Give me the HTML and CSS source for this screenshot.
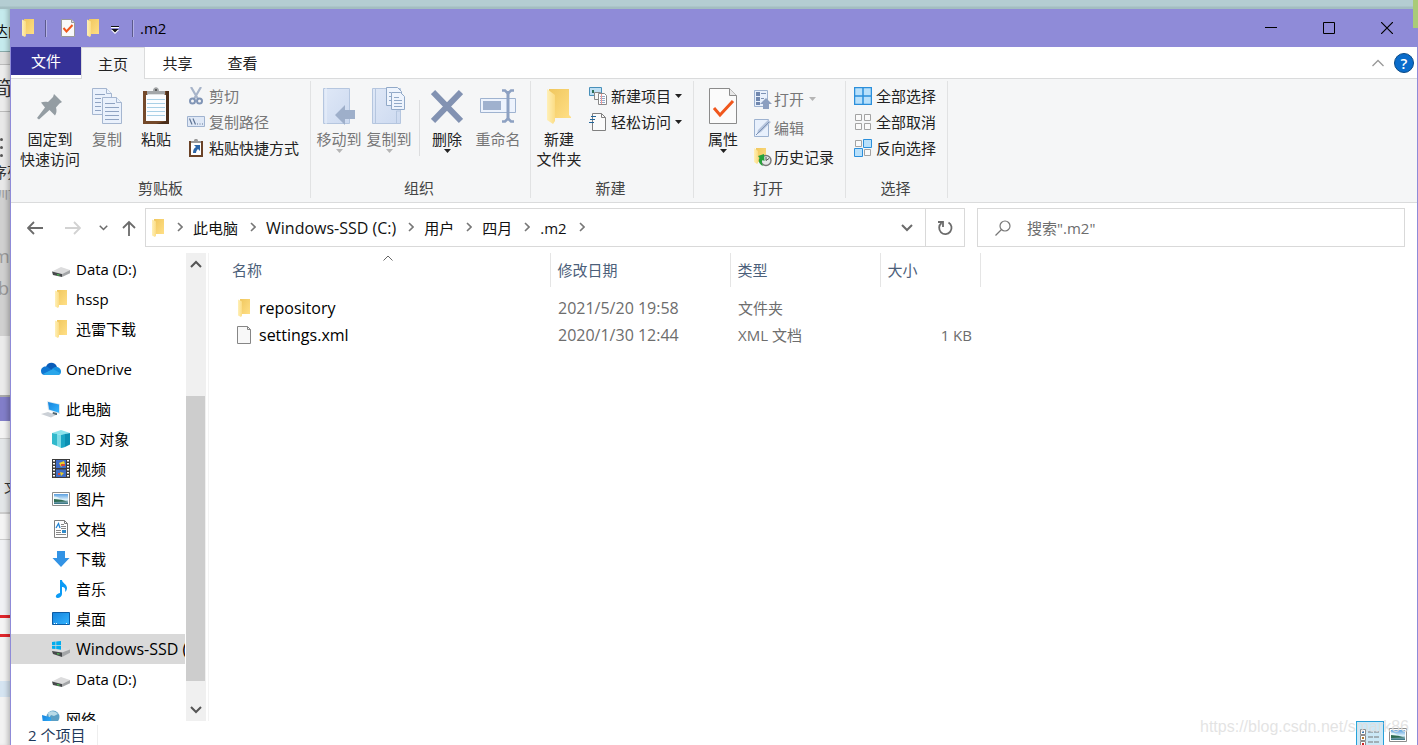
FILE: index.html
```html
<!DOCTYPE html>
<html lang="zh-CN">
<head>
<meta charset="utf-8">
<title>.m2</title>
<link rel="stylesheet" href="styles.css">
</head>
<body>
<svg class="defs" aria-hidden="true">
  <defs>
    <linearGradient id="gFold" x1="0" x2="1" y1="0" y2="1"><stop offset="0" stop-color="#f0c75e"/><stop offset="1" stop-color="#ffdf86"/></linearGradient>
    <linearGradient id="gFlap" x1="0" x2="1" y1="0" y2="0"><stop offset="0" stop-color="#fff0b8"/><stop offset="1" stop-color="#fbdc84"/></linearGradient>
    <linearGradient id="gPic" x1="0" x2="0" y1="0" y2="1"><stop offset="0" stop-color="#5b9fe0"/><stop offset=".55" stop-color="#d8eefa"/><stop offset="1" stop-color="#2c6a78"/></linearGradient>
    <linearGradient id="gBook" x1="0" x2="1" y1="0" y2="1"><stop offset="0" stop-color="#dfe8f7"/><stop offset="1" stop-color="#cddaf0"/></linearGradient>
    <linearGradient id="gBlue" x1="0" x2="1" y1="0" y2="1"><stop offset="0" stop-color="#1583dc"/><stop offset="1" stop-color="#35b5ff"/></linearGradient>
  </defs>
  <symbol id="folder" viewBox="0 0 14 18"><path d="M3 0h10v15H3z" fill="url(#gFold)"/><path d="M1 0.5l4 2v14L4 18l-3-1.500z" fill="url(#gFlap)"/></symbol>
  <symbol id="drive" viewBox="0 0 18 10"><path d="M0 4.500L9 0l9 3-8 4z" fill="#dcdcdd"/><path d="M0 4.500L10 7v3L1 8z" fill="#46494b"/><path d="M10 7l8-4v3.200L10 10z" fill="#a4a6a8"/><path d="M5 7.200l2.500.4v1L5 8.200z" fill="#4bd452"/></symbol>
  <symbol id="chev" viewBox="0 0 6 10"><path d="M1 1l4 4-4 4" fill="none" stroke="#777" stroke-width="1.600"/></symbol>
  <symbol id="tri" viewBox="0 0 7 4"><path d="M0 0h7L3.500 4z" fill="currentColor"/></symbol>
  <symbol id="picture" viewBox="0 0 18 14"><path d="M.5.5h17v13H.5z" fill="#fff" stroke="#8c8c8c"/><path d="M2 2h14v10H2z" fill="url(#gPic)"/><path d="M2 5c4 1 6 3 14 4.500L2 10z" fill="#2e6b52"/><path d="M2 4.500c3 0 6 1.500 7 3.200L2 7z" fill="#e4f4f8"/></symbol>
  <symbol id="down" viewBox="0 0 12 8"><path d="M1 1l5 5 5-5" fill="none" stroke="currentColor" stroke-width="2"/></symbol>
</svg>

<div class="desktop">
  <div class="top-edge"></div>
  <div class="left-edge" aria-hidden="true">
    <div class="seg seg-cyan"><span>达的</span></div>
    <div class="seg seg-gap"></div>
    <div class="seg seg-tool"><span>简</span></div>
    <div class="seg seg-list"><i></i><i></i><i></i><span>序列</span></div>
    <div class="seg seg-grey"><span class="cut">训训</span><span class="lat">m</span><span class="lat low">bl</span></div>
    <div class="seg seg-pale"></div>
    <div class="seg seg-purple"></div>
    <div class="seg seg-light"></div>
    <div class="seg seg-card"><span>文</span></div>
    <div class="seg seg-row"></div>
    <div class="seg seg-plain"></div>
    <div class="seg seg-red"></div>
    <div class="seg seg-blank"></div>
    <div class="seg seg-blue"></div>
    <div class="seg seg-rest"></div>
  </div>

  <div class="window">
    <header class="titlebar">
      <svg class="t-folder" width="14" height="18"><use href="#folder"/></svg>
      <span class="t-sep"></span>
      <button class="t-btn t-check" aria-label="属性"><svg width="14" height="18" viewBox="0 0 14 18"><path d="M.5.500h10l3 3v14H.5z" fill="#f9f9f9" stroke="#999"/><path d="M10.500.500v3h3" fill="#ddd" stroke="#999"/><path d="M2.500 9l3 3.500L11.500 6" fill="none" stroke="#f0571d" stroke-width="2"/></svg></button>
      <button class="t-btn t-new" aria-label="新建文件夹"><svg width="14" height="18"><use href="#folder"/></svg></button>
      <button class="t-btn t-more" aria-label="自定义快速访问工具栏"><svg width="8" height="8" viewBox="0 0 8 8"><path d="M0 .500h8" stroke="#111"/><path d="M0 1.500h8" stroke="#fff"/><path d="M0 4h8L4 8z" fill="#fff"/><path d="M.5 3h7L4 6.500z" fill="#111"/></svg></button>
      <span class="t-sep"></span>
      <span class="t-title">.m2</span>
      <div class="win-btns">
        <button aria-label="最小化"><svg width="12" height="12" viewBox="0 0 12 12"><path d="M0 5.500h12" stroke="#000"/></svg></button>
        <button aria-label="最大化"><svg width="12" height="12" viewBox="0 0 12 12"><path d="M.5.500h11v11H.5z" fill="none" stroke="#000"/></svg></button>
        <button aria-label="关闭"><svg width="12" height="12" viewBox="0 0 12 12"><path d="M0 0l12 12M12 0L0 12" stroke="#000" stroke-width="1.200"/></svg></button>
      </div>
      <div class="corner-note"></div>
    </header>

    <nav class="tabs">
      <button class="tab file">文件</button>
      <button class="tab active">主页</button>
      <button class="tab">共享</button>
      <button class="tab">查看</button>
      <div class="tabs-right">
        <button aria-label="最小化功能区"><svg width="12" height="8" viewBox="0 0 12 8"><path d="M.5 7L6 1.500 11.500 7" fill="none" stroke="#999" stroke-width="1.300"/></svg></button>
        <button class="help" aria-label="帮助">?</button>
      </div>
    </nav>

    <section class="ribbon">
      <div class="group g-clip">
        <div class="group-body">
          <button class="big w78"><svg width="28" height="40" viewBox="0 0 28 40"><path d="M18 7l8 8-2.500 1.500-3.500 4c1 3 .5 6-1 8l-5.500-5.500L3 32.500 1 31l8-10.500L5 15.500c2-1 5-1 7-.5l5-5z" fill="#949da3"/></svg>固定到<br>快速访问</button>
          <button class="big w36 off"><svg width="32" height="40" viewBox="0 0 32 40"><g fill="#eaf1fc" stroke="#a5b6d0"><path d="M1.500 1.500h14l5 5v21h-19z"/><path d="M15.500 1.500v5h5" /><path d="M11.500 10.500h14l5 5v21h-19z"/><path d="M25.500 10.500v5h5"/></g><path d="M4 7.500h10M4 11.500h6M4 15.500h6M4 19.500h6M4 23.500h6M14 16.500h10M14 20.500h14M14 24.500h14M14 28.500h14M14 32.500h14" stroke="#8fa3c2"/></svg>复制</button>
          <button class="big w62"><svg width="28" height="40" viewBox="0 0 28 40"><path d="M1 4h26v33H1z" fill="#74492a"/><path d="M24 4h3v33H14l10-3z" fill="#4a2e1b"/><path d="M4 8h20v26H4z" fill="#fbfdff"/><path d="M5 12.500h18M5 16.500h18M5 20.500h18M5 24.500h18M5 28.500h18" stroke="#a9d0e6"/><path d="M5 8V4h6c0-5 6-5 6 0h6v4z" fill="#a3a6a8"/><path d="M6 7.500h16" stroke="#dfe1e2"/><circle cx="14" cy="3" r="1" fill="#444"/></svg>粘贴</button>
          <div class="stack">
            <button class="small off"><svg width="18" height="18" viewBox="0 0 18 18"><path d="M4 0l7 12M14 0L7 12" stroke="#a7b4c9" stroke-width="2.200"/><g fill="none" stroke="#8195b6" stroke-width="2"><circle cx="5.500" cy="14" r="2.500"/><circle cx="12.500" cy="14" r="2.500"/></g></svg>剪切</button>
            <button class="small off"><svg width="18" height="18" viewBox="0 0 18 18"><path d="M.5 3.500h17v10H.5z" fill="#dfe8f6" stroke="#9fb2cf"/><path d="M2.500 5.500l2.500 6M6 5.500l2.500 6" stroke="#5f7595" stroke-width="1.200"/><path d="M10 11h6" stroke="#5f7595" stroke-width="1.200" stroke-dasharray="1 1.500"/></svg>复制路径</button>
            <button class="small"><svg width="18" height="18" viewBox="0 0 18 18"><path d="M2 2h14v16H2z" fill="#6b4328"/><path d="M4 4h10v12H4z" fill="#fff"/><path d="M4 4V2h3c0-3 4-3 4 0h3v2z" fill="#999"/><path d="M7 6h6v6l-2-2c-1 1-2 2-2 4H6c0-3 1-5 3-6z" fill="#2c66a8"/></svg>粘贴快捷方式</button>
          </div>
        </div>
        <div class="group-name">剪贴板</div>
      </div>

      <div class="group g-org">
        <div class="group-body">
          <button class="big w50 off"><svg width="32" height="40" viewBox="0 0 32 40"><path d="M.5 1.500h26v35H.5z" fill="url(#gBook)" stroke="#b5c6df"/><path d="M3 1v36" stroke="#eaf1fb"/><path d="M12 28l10-10v5h10v9H22v6z" fill="#9eafca"/></svg>移动到<svg class="tri" width="7" height="4"><use href="#tri"/></svg></button>
          <button class="big w50 off"><svg width="34" height="40" viewBox="0 0 34 40"><path d="M.5 1.500h28v35h-28z" fill="url(#gBook)" stroke="#b5c6df"/><path d="M3.500 1v36M24.500 36V24h4" stroke="#b5c6df" fill="none"/><g fill="#eef4fd" stroke="#91a9c8"><path d="M14.500.500h11l4 4v14h-15z"/><path d="M19.500 5.500h9l4 4v13h-13z"/></g><path d="M17 5.500h2M17 9.500h2M17 13.500h2M22 10.500h5M22 13.500h8M22 16.500h8M22 19.500h8" stroke="#91a9c8"/></svg>复制到<svg class="tri" width="7" height="4"><use href="#tri"/></svg></button>
          <span class="inner-sep"></span>
          <button class="big w54"><svg width="32" height="40" viewBox="0 0 32 40"><path d="M2 5l28 29M30 5L2 34" stroke="#8292b2" stroke-width="6"/></svg>删除<svg class="tri" width="7" height="4"><use href="#tri"/></svg></button>
          <button class="big w48 off"><svg width="36" height="40" viewBox="0 0 36 40"><path d="M.5 11.500h35v14H.5z" fill="#edf3fd" stroke="#9fb3d0"/><path d="M3 14h18v9H3z" fill="#9fb1ce"/><path d="M28 4v29" stroke="#8da1c2" stroke-width="3"/><path d="M22 3.500h3l3 3 3-3h3M22 34.500h3l3-3 3 3h3" fill="none" stroke="#8da1c2" stroke-width="2.500"/></svg>重命名</button>
        </div>
        <div class="group-name">组织</div>
      </div>

      <div class="group g-new">
        <div class="group-body">
          <button class="big w56"><svg width="26" height="40" viewBox="0 0 26 40"><path d="M3 2h20v26l2 2v1H3z" fill="url(#gFold)"/><path d="M1 2l8 6v26l-2 3-6-4z" fill="url(#gFlap)"/></svg>新建<br>文件夹</button>
          <div class="stack">
            <button class="small"><svg width="18" height="18" viewBox="0 0 18 18"><path d="M.5.500h12v8H.5z" fill="#bfe0f4" stroke="#4890ba"/><path d="M3 3h2v3H3z" fill="#2c6f58"/><path d="M5.500 5.500h6v7h-6z" fill="#f7f7f7" stroke="#888"/><path d="M9.500 6.500h6l2 2v9h-8z" fill="#fff" stroke="#888"/><path d="M11 9.500h5M11 11.500h5M11 13.500h5M11 15.500h5" stroke="#91a9c8"/><path d="M12.500 7v10" stroke="#e99"/></svg>新建项目<svg class="side-tri" width="7" height="4"><use href="#tri"/></svg></button>
            <button class="small"><svg width="18" height="18" viewBox="0 0 18 18"><path d="M3.500.500h9l4 4v13h-13z" fill="#fbfbfb" stroke="#808080"/><path d="M12.500.500v4h4" fill="none" stroke="#808080"/><path d="M2 3.500h5M1 6.500h5M0 9.500h5" stroke="#22669b" stroke-width="1.200"/></svg>轻松访问<svg class="side-tri" width="7" height="4"><use href="#tri"/></svg></button>
          </div>
        </div>
        <div class="group-name">新建</div>
      </div>

      <div class="group g-open">
        <div class="group-body">
          <button class="big w58"><svg width="28" height="40" viewBox="0 0 28 40"><path d="M.5 1.500h20l7 7v28H.5z" fill="#fbfbfb" stroke="#8b8b8b"/><path d="M20.500 1.500v7h7" fill="#e8e8e8" stroke="#8b8b8b"/><path d="M5 21l6 7 13-14" fill="none" stroke="#f0571d" stroke-width="3"/></svg>属性<svg class="tri" width="7" height="4"><use href="#tri"/></svg></button>
          <div class="stack roomy">
            <button class="small off"><svg width="18" height="20" viewBox="0 0 18 20"><path d="M.5 1.500h13v16H.5z" fill="#e8f0fc" stroke="#9db2d0"/><path d="M2 3h4v4H2zM2 8h4v4H2zM2 13h4v3H2z" fill="#7087ae"/><path d="M7 4.500h5M7 9.500h3" stroke="#7d92b5"/><path d="M12 9l6 6h-3v5H9v-5H6z" fill="#8c9fc0"/></svg>打开<svg class="side-tri" width="7" height="4"><use href="#tri"/></svg></button>
            <button class="small off"><svg width="18" height="20" viewBox="0 0 18 20"><path d="M.5 1.500h14v17H.5z" fill="#e8f0fc" stroke="#9db2d0"/><path d="M3 16l1-4L14 2l3 2L7 14z" fill="#b5c4dc"/><path d="M2 17L15 4" stroke="#7d92b5"/></svg>编辑</button>
            <button class="small"><svg width="18" height="20" viewBox="0 0 18 20"><path d="M2 1h10v14H2z" fill="url(#gFold)"/><path d="M0 1l4 3v12l-1 1-3-2z" fill="url(#gFlap)"/><circle cx="12" cy="13.500" r="5" fill="#e5e7e8" stroke="#777" stroke-width="1.400"/><path d="M12 10v3.500l3-2" fill="none" stroke="#555"/><path d="M10 7L4 9l1.500 2c-2 3 0 7 4 8-2-2-2-4-1-6l2 1z" fill="#26a23a"/></svg>历史记录</button>
          </div>
        </div>
        <div class="group-name">打开</div>
      </div>

      <div class="group g-sel">
        <div class="group-body">
          <div class="stack">
            <button class="small"><svg width="18" height="18" viewBox="0 0 18 18"><path d="M.5.500h17v17H.5zM9 0v18M0 9h18" fill="#b8e0fb" stroke="#2b8fdb" stroke-width="1.500"/></svg>全部选择</button>
            <button class="small"><svg width="18" height="18" viewBox="0 0 18 18"><path d="M1.500 1.500h6v6h-6zM10.500 1.500h6v6h-6zM1.500 10.500h6v6h-6zM10.500 10.500h6v6h-6z" fill="#fafafa" stroke="#a3a3a3"/></svg>全部取消</button>
            <button class="small"><svg width="18" height="18" viewBox="0 0 18 18"><path d="M1.500 1.500h6v6h-6zM10.500 10.500h6v6h-6z" fill="#fafafa" stroke="#a3a3a3"/><path d="M9.500.500h8v8h-8zM.5 9.500h8v8h-8z" fill="#b8e0fb" stroke="#2b8fdb"/></svg>反向选择</button>
          </div>
        </div>
        <div class="group-name">选择</div>
      </div>
    </section>

    <div class="navbar">
      <div class="nav-btns">
        <button aria-label="返回"><svg width="16" height="16" viewBox="0 0 16 16"><path d="M1 8h15M7 2L1 8l6 6" fill="none" stroke="#6b6b6b" stroke-width="1.800"/></svg></button>
        <button aria-label="前进"><svg width="16" height="16" viewBox="0 0 16 16"><path d="M0 8h15M9 2l6 6-6 6" fill="none" stroke="#d2d2d2" stroke-width="1.800"/></svg></button>
        <button class="nav-recent" aria-label="最近的位置"><svg width="9" height="6" viewBox="0 0 12 8"><use href="#down"/></svg></button>
        <button class="nav-up" aria-label="上移"><svg width="14" height="16" viewBox="0 0 14 16"><path d="M7 16V2M1 8l6-6 6 6" fill="none" stroke="#6b6b6b" stroke-width="1.800"/></svg></button>
      </div>
      <div class="address">
        <svg width="14" height="18"><use href="#folder"/></svg>
        <svg class="chev" width="6" height="10"><use href="#chev"/></svg><a href="#">此电脑</a>
        <svg class="chev" width="6" height="10"><use href="#chev"/></svg><a href="#" class="latin">Windows-SSD (C:)</a>
        <svg class="chev" width="6" height="10"><use href="#chev"/></svg><a href="#">用户</a>
        <svg class="chev" width="6" height="10"><use href="#chev"/></svg><a href="#">四月</a>
        <svg class="chev" width="6" height="10"><use href="#chev"/></svg><a href="#">.m2</a>
        <svg class="chev" width="6" height="10"><use href="#chev"/></svg>
        <button class="addr-drop" aria-label="以前的位置"><svg width="12" height="8"><use href="#down"/></svg></button>
        <button class="addr-refresh" aria-label="刷新"><svg width="16" height="16" viewBox="0 0 16 16"><path d="M11.500 2.500A6.200 6.200 0 1 1 4.500 3" fill="none" stroke="#6b6b6b" stroke-width="1.800"/><path d="M1 2h5v5" fill="none" stroke="#6b6b6b" stroke-width="1.800"/></svg></button>
      </div>
      <label class="search">
        <svg width="16" height="16" viewBox="0 0 16 16"><circle cx="10" cy="6" r="5" fill="none" stroke="#777" stroke-width="1.200"/><path d="M6.500 9.500L.5 15.500" stroke="#777" stroke-width="1.200"/></svg>
        <input type="text" placeholder='搜索".m2"' aria-label='搜索".m2"'>
      </label>
    </div>

    <main class="content">
      <nav class="tree">
        <a href="#" class="node sub"><svg class="disk" width="18" height="10"><use href="#drive"/></svg>Data (D:)</a>
        <a href="#" class="node sub"><svg width="18" height="18"><use href="#folder"/></svg>hssp</a>
        <a href="#" class="node sub"><svg width="18" height="18"><use href="#folder"/></svg>迅雷下载</a>
        <a href="#" class="node top"><svg width="20" height="14" viewBox="0 0 20 14"><path d="M5 5c1-5 9-6 11 0l-4 5z" fill="#0a5cb8"/><path d="M0 9c0-4 5-6 8-3l5 3-8 4H4c-2 0-4-1-4-4z" fill="#0f76d2"/><path d="M11 7c4-4 9-1 9 2.500 0 2-1 3.500-3 3.500z" fill="#1590df"/><path d="M2 12l10-5 7 4c-1 2-2 2-3 2H4z" fill="#2aa6ea"/></svg>OneDrive</a>
        <a href="#" class="node top"><svg width="20" height="18" viewBox="0 0 20 18"><path d="M6 1l13 3v10L7 10z" fill="#dbe8f0"/><path d="M7 2l11 2.500v8.200L8 9.500z" fill="url(#gBlue)"/><path d="M12 12l4 1v2l-5 0z" fill="#526773"/><path d="M0 14l7-2 8 3-5 2.500z" fill="#cbd0d6"/></svg>此电脑</a>
        <a href="#" class="node sub"><svg width="18" height="18" viewBox="0 0 18 18"><path d="M0 3l9-3 9 3-9 2z" fill="#8be3ec"/><path d="M0 3l5 1v12l-5-2z" fill="#31b9cc"/><path d="M13 4l5-1v11.500L13 17z" fill="#0b8fb2"/><path d="M5 4l4 1 4-1v13l-4 1-4-2z" fill="#7edbe6"/><path d="M9 5l4-1v13l-4 1z" fill="#1ba6c4"/></svg>3D 对象</a>
        <a href="#" class="node sub"><svg width="18" height="20" viewBox="0 0 18 20"><path d="M0 0h18v19H0z" fill="#3b3b3b"/><path d="M2 1v18M16 1v18" stroke="#fff" stroke-width="2" stroke-dasharray="1.500 1.500"/><path d="M4 1h10v8H4zM4 10.500h10V18H4z" fill="#3f6dc8"/><path d="M7 4l5-2 1 3-4 3zM8 13l4 1-3 3z" fill="#e9ce2b"/><path d="M9 5h4v2H9zM6 14h2v2H6z" fill="#d94a35"/></svg>视频</a>
        <a href="#" class="node sub"><svg width="18" height="14"><use href="#picture"/></svg>图片</a>
        <a href="#" class="node sub"><svg width="18" height="18" viewBox="0 0 18 18"><path d="M2.500.500h10l3 3v14h-13z" fill="#fff" stroke="#808080"/><path d="M12.500.500v3h3" fill="none" stroke="#808080"/><path d="M4 8l2.500-4.500L8 8" fill="none" stroke="#2286d8" stroke-width="1.300"/><path d="M9 4.500h3M9 6.500h5M9 8.500h5M4 10.500h5M4 12.500h5M4 14.500h10" stroke="#888"/><path d="M10 10h4v3h-4z" fill="#318ac8"/></svg>文档</a>
        <a href="#" class="node sub"><svg width="18" height="16" viewBox="0 0 18 16"><path d="M5 0h8v7h4.500L9 16 .5 7H5z" fill="#3293e5"/></svg>下载</a>
        <a href="#" class="node sub"><svg width="18" height="18" viewBox="0 0 18 18"><path d="M8 0h2c0 3 5 4 5 8 0 2-1 3-2 4 1-4-1-5-3-5v7c0 2-2 4-4.500 4S3 14 8 13z" fill="#0b9bf5"/></svg>音乐</a>
        <a href="#" class="node sub"><svg width="18" height="14" viewBox="0 0 18 14"><path d="M.5.500h17v12H.5z" fill="url(#gBlue)" stroke="#0c5ca4"/><path d="M2 11.500h14" stroke="#fff" stroke-dasharray="1 1 1 9"/></svg>桌面</a>
        <a href="#" class="node sub selected latin"><svg width="18" height="16" viewBox="0 0 18 16"><path d="M0 10l9-4 9 2.500-8 3.500z" fill="#dcdcdd"/><path d="M0 10l10 1.500V16L1 13z" fill="#46494b"/><path d="M10 11.500l8-3v3.200L10 16z" fill="#a4a6a8"/><path d="M5 12.200l2.500.4v1l-2.500-.4z" fill="#4bd452"/><path d="M0 1l3.500-.5V4H0zM4.200.400L9 0v4H4.200zM0 4.700h3.500v3.400L0 7.700zM4.200 4.700H9v4l-4.800-.6z" fill="#00adef"/></svg>Windows-SSD (C:)</a>
        <a href="#" class="node sub"><svg class="disk" width="18" height="10"><use href="#drive"/></svg>Data (D:)</a>
        <a href="#" class="node top"><svg width="20" height="18" viewBox="0 0 20 18"><circle cx="12" cy="7" r="6.500" fill="#5b9fc4"/><path d="M7 3c3-3 8-2 10 1l-4 2-3-1-2 3z" fill="#b9dbe8"/><path d="M1 5l9 2.500v9L2 14z" fill="url(#gBlue)"/></svg>网络</a>
      </nav>
      <div class="scrollbar">
        <button aria-label="向上滚动"><svg class="flip" width="12" height="8"><use href="#down"/></svg></button>
        <div class="thumb"></div>
        <button aria-label="向下滚动"><svg width="12" height="8"><use href="#down"/></svg></button>
      </div>
      <div class="files">
        <svg class="sort" width="10" height="6" viewBox="0 0 10 6"><path d="M.5 5.500L5 1l4.500 4.500" fill="none" stroke="#666"/></svg>
        <table>
          <colgroup><col class="c-name"><col class="c-date"><col class="c-type"><col class="c-size"><col></colgroup>
          <thead><tr><th>名称</th><th>修改日期</th><th>类型</th><th>大小</th><th class="filler"></th></tr></thead>
          <tbody>
            <tr><td class="name latin"><svg width="14" height="18"><use href="#folder"/></svg>repository</td><td class="latin">2021/5/20 19:58</td><td>文件夹</td><td class="num"></td><td></td></tr>
            <tr><td class="name latin"><svg width="14" height="18" viewBox="0 0 14 18"><path d="M.5.500h10l3 3v14H.5z" fill="#f8f8f8" stroke="#868686"/><path d="M10.500.500v3h3" fill="none" stroke="#868686"/></svg>settings.xml</td><td class="latin">2020/1/30 12:44</td><td>XML 文档</td><td class="num">1 KB</td><td></td></tr>
          </tbody>
        </table>
      </div>
    </main>

    <footer class="status">
      <span class="count">2 个项目</span>
      <div class="views">
        <button class="view on" aria-label="详细信息"><svg width="20" height="18" viewBox="0 0 20 18"><path d="M.5.500h5v5h-5zM.5 6.500h5v5h-5zM.5 12.500h5v5h-5z" fill="#fff" stroke="#8c8c8c"/><path d="M2 2h2v2H2z" fill="#357ab5"/><path d="M2 8h2v2H2z" fill="#b4782a"/><path d="M2 14h2v2H2z" fill="#c22"/><path d="M8 3h5M14 3h5M8 8h5M14 8h5M8 13h5M14 13h5" stroke="#777"/></svg></button>
        <button class="view" aria-label="大图标"><svg width="18" height="14"><use href="#picture"/></svg></button>
      </div>
      <div class="watermark">https://blog.csdn.net/smark86</div>
    </footer>
  </div>
</div>
</body>
</html>
```
FILE: styles.css
```css
* { box-sizing: border-box; }

body {
  margin: 0;
  height: 100vh;
  overflow: hidden;
  font-family: "Open Sans", "Noto Sans CJK SC", sans-serif;
  font-size: 15px;
  line-height: 20px;
  color: #000;
}

button, input {
  margin: 0;
  padding: 0;
  border: 0;
  background: none;
  font: inherit;
  color: inherit;
}

a { color: inherit; text-decoration: none; }
svg { display: block; flex: none; }
.defs { position: absolute; width: 0; height: 0; }
.latin { font-size: 16px; }

/* Surroundings of the window */
.desktop {
  display: grid;
  grid-template-columns: 10px minmax(0, 1fr);
  grid-template-rows: 9px minmax(0, 1fr);
  height: 100vh;
}

.top-edge {
  grid-column: 1 / -1;
  background: linear-gradient(#b4cdd2 6px, #a3bdc1 7px);
}

.left-edge {
  display: flex;
  flex-direction: column;
  overflow: hidden;
  box-shadow: inset -5px 0 5px -3px rgba(0, 0, 0, .25);
}

.seg {
  position: relative;
  z-index: -1;
  flex: none;
  overflow: hidden;
  white-space: nowrap;
}

.seg span { display: block; color: #333; }
.seg-cyan { height: 43px; background: #c5eaed; border-bottom: 1px solid #8aa; padding-top: 12px; }
.seg-cyan span { margin-left: -7px; color: #111; }
.seg-gap { height: 13px; background: #dedede; border-bottom: 1px solid #bbb; }
.seg-tool { height: 47px; background: #ececec; border-bottom: 1px solid #bbb; padding-top: 14px; }
.seg-tool span { margin-left: -8px; font-size: 20px; }
.seg-list { height: 78px; background: #e8e8e8; padding-top: 26px; }
.seg-list i { display: block; width: 3px; height: 3px; margin-bottom: 5px; background: #555; border-radius: 50%; }
.seg-list span { margin-left: -8px; }
.seg-grey { height: 146px; background: #d0d0d0; }
.seg-grey span { color: #999; margin-left: -7px; }
.seg-grey .cut { height: 10px; line-height: 4px; }
.seg-grey .lat { margin-top: 46px; font-size: 18px; }
.seg-grey .low { margin: 12px 0 0 -2px; }
.seg-pale { height: 61px; background: #ebebeb; border-bottom: 2px solid #aaa; }
.seg-purple { height: 24px; background: #827ec9; }
.seg-light { height: 18px; background: #f3f3f3; border-bottom: 1px solid #ccc; }
.seg-card { height: 75px; background: #e3e6e8; border-bottom: 2px solid #ccc; padding-top: 38px; }
.seg-card span { margin-left: 4px; font-size: 14px; }
.seg-row { height: 26px; background: #f4f4f4; border-bottom: 1px solid #ccc; }
.seg-plain { height: 75px; background: #f0f1f4; }
.seg-red { height: 22px; background: #f4f4f4; border: solid #e0262c; border-width: 3px 0; }
.seg-blank { height: 44px; background: #f2f2f2; }
.seg-blue { height: 16px; background: #d5e4f1; }
.seg-rest { flex: 1; background: #f2f2f2; }

.window {
  display: flex;
  flex-direction: column;
  min-width: 0;
  background: #fff;
  border: solid #8f8bd8;
  border-width: 0 1px;
}

/* Title bar */
.titlebar {
  position: relative;
  display: flex;
  align-items: center;
  flex: none;
  height: 38px;
  padding-left: 10px;
  background: #8f8bd8;
}

.t-sep { width: 1px; height: 17px; background: #5c5a8c; box-shadow: 1px 0 #b5b2e6; }
.t-folder { margin-right: 10px; }
.t-btn { display: flex; }
.t-check { margin-left: 15px; }
.t-new { margin-left: 11px; }
.t-more { margin: 4px 13px 0 11px; }
.t-title { margin-left: 7px; }
.win-btns { display: flex; height: 100%; margin-left: auto; padding-right: 1px; }
.win-btns button { display: flex; align-items: center; justify-content: center; width: 58px; }
.corner-note { position: absolute; top: -9px; right: -1px; width: 5px; height: 28px; background: #a9cb78; }

/* Ribbon tabs */
.tabs { display: flex; flex: none; height: 32px; border-bottom: 1px solid #dadbdc; }
.tab { width: 65px; height: 31px; color: #222; }
.tab.file { width: 70px; height: 28px; background: #353197; color: #fff; }
.tab.active {
  width: 64px;
  height: 32px;
  background: #f5f6f7;
  border: solid #dadbdc;
  border-width: 1px 1px 0;
}
.tabs-right { display: flex; align-items: center; gap: 10px; margin-left: auto; padding-right: 3px; }
.help {
  width: 20px;
  height: 20px;
  border: 1px solid #0a4a86;
  border-radius: 50%;
  background: #0a6ccb;
  color: #fff;
  font-weight: 600;
  line-height: 18px;
}

/* Ribbon */
.ribbon { display: flex; flex: none; height: 124px; background: #f5f6f7; border-bottom: 1px solid #dadbdc; }
.group { display: flex; flex-direction: column; flex: none; margin: 2px 0 4px; border-right: 1px solid #e1e2e3; }
.group-body { display: flex; flex: 1; align-items: flex-start; min-height: 0; }
.group-name { text-align: center; color: #444; }
.g-clip { width: 300px; }
.g-org { width: 220px; }
.g-org .group-name { padding-right: 3px; }
.g-org .group-body { padding-left: 3px; }
.g-new { width: 163px; }
.g-new .group-name { padding-right: 3px; }
.g-open { width: 152px; }
.g-open .group-name { padding-right: 3px; }
.g-sel { width: 102px; padding-right: 2px; }

.big {
  display: flex;
  flex-direction: column;
  align-items: center;
  padding-top: 6px;
  color: #222;
  white-space: nowrap;
}
.big > svg:first-child { margin-bottom: 2px; }
.big, .small { flex: none; }
.w36 { width: 36px; }
.w48 { width: 48px; }
.w50 { width: 50px; }
.w54 { width: 54px; }
.w56 { width: 56px; }
.w58 { width: 58px; }
.w62 { width: 62px; }
.w78 { width: 78px; }
.inner-sep { width: 1px; height: 56px; margin: 19px 0 0 5px; background: #dcdddf; }

.stack { display: flex; flex-direction: column; padding-top: 2px; }
.small { display: flex; align-items: center; gap: 4px; height: 26px; color: #222; }
.small.off, .big.off { color: #777; }
.off .tri, .off .side-tri { color: #b5b5b5; }
.roomy { padding: 3px 0 0 2px; }
.roomy .small { gap: 2px; height: 29px; }
.roomy .side-tri { margin-left: 3px; }
.g-new .stack { padding-left: 2px; }
.g-sel .stack { padding-left: 8px; }

/* Navigation row */
.navbar { display: flex; flex: none; align-items: flex-start; height: 50px; padding: 5px 12px 0 0; }
.nav-btns { display: flex; flex: none; width: 134px; height: 39px; align-items: center; padding-left: 16px; color: #6b6b6b; }
.nav-btns button { display: flex; margin-right: 22px; }
.nav-btns .nav-recent { margin: 0 14px 0 -4px; }
.nav-btns .nav-up { margin: 0; }
.address {
  display: flex;
  flex: 2 1 820px;
  align-items: center;
  min-width: 0;
  height: 39px;
  padding-left: 5px;
  border: 1px solid #d9d9d9;
  color: #111;
  white-space: nowrap;
}
.chev { margin: 0 10px 2px 12px; }
.addr-drop { display: flex; justify-content: center; width: 36px; margin-left: auto; color: #6b6b6b; }
.addr-refresh {
  display: flex;
  align-items: center;
  justify-content: center;
  width: 39px;
  height: 100%;
  border-left: 1px solid #d9d9d9;
}
.search {
  display: flex;
  flex: 1 1 428px;
  align-items: center;
  gap: 16px;
  min-width: 0;
  height: 39px;
  margin-left: 12px;
  padding-left: 17px;
  border: 1px solid #d9d9d9;
}
.search input { flex: 1; min-width: 0; outline: 0; }
.search input::placeholder { color: #6d6d6d; opacity: 1; }

/* Folder tree */
.content { display: flex; flex: 1; min-height: 0; }
.tree { flex: none; width: 174px; padding-top: 1px; overflow: hidden; }
.node { display: flex; align-items: center; height: 30px; white-space: nowrap; }
.node.sub { gap: 6px; padding-left: 41px; }
.node.top { gap: 5px; margin-top: 10px; padding-left: 30px; }
.disk { margin-top: 6px; }
.selected { background: #d9d9d9; }

.scrollbar {
  display: flex;
  flex: none;
  flex-direction: column;
  width: 20px;
  margin-left: 1px;
  background: #f0f0f0;
  color: #555;
}
.scrollbar button { display: flex; align-items: center; justify-content: center; height: 22px; }
.flip { transform: rotate(180deg); }
.thumb { height: 61%; margin: auto 1px 18px 0; background: #cdcdcd; }

/* File list */
.files { position: relative; flex: 1; margin-left: 2px; border-left: 1px solid #f3f3f3; }
.sort { position: absolute; top: 2px; left: 174px; }
table { width: 100%; table-layout: fixed; border-collapse: collapse; color: #6d6d6d; }
.c-name { width: 341px; }
.c-date { width: 180px; }
.c-type { width: 150px; }
.c-size { width: 100px; }
th {
  height: 34px;
  padding: 0 7px;
  border-right: 1px solid #e5e5e5;
  color: #4c607a;
  font-weight: 400;
  text-align: left;
}
th:first-child { padding-left: 23px; }
th.filler { border: 0; }
td { height: 27px; padding: 0 8px; }
tbody::before { content: ""; display: block; height: 7px; }
td.name { display: flex; align-items: center; gap: 8px; padding-left: 28px; color: #000; }
.num { text-align: right; }

/* Status bar */
.status { position: relative; display: flex; flex: none; justify-content: space-between; height: 24px; color: #1e395b; }
.count { align-self: center; margin-top: 4px; padding: 0 12px 0 17px; border-right: 1px solid #eee; }
.views { display: flex; padding-right: 10px; }
.view { display: flex; justify-content: center; padding-top: 7px; }
.view.on { width: 28px; margin-right: 5px; border: 1px solid #26a0da; border-bottom: 0; background: #cbe8f6; }
.watermark {
  position: absolute;
  right: 8px;
  bottom: 8px;
  color: rgba(222, 222, 222, .85);
  font-family: "Liberation Sans", sans-serif;
  font-size: 16px;
}
```
